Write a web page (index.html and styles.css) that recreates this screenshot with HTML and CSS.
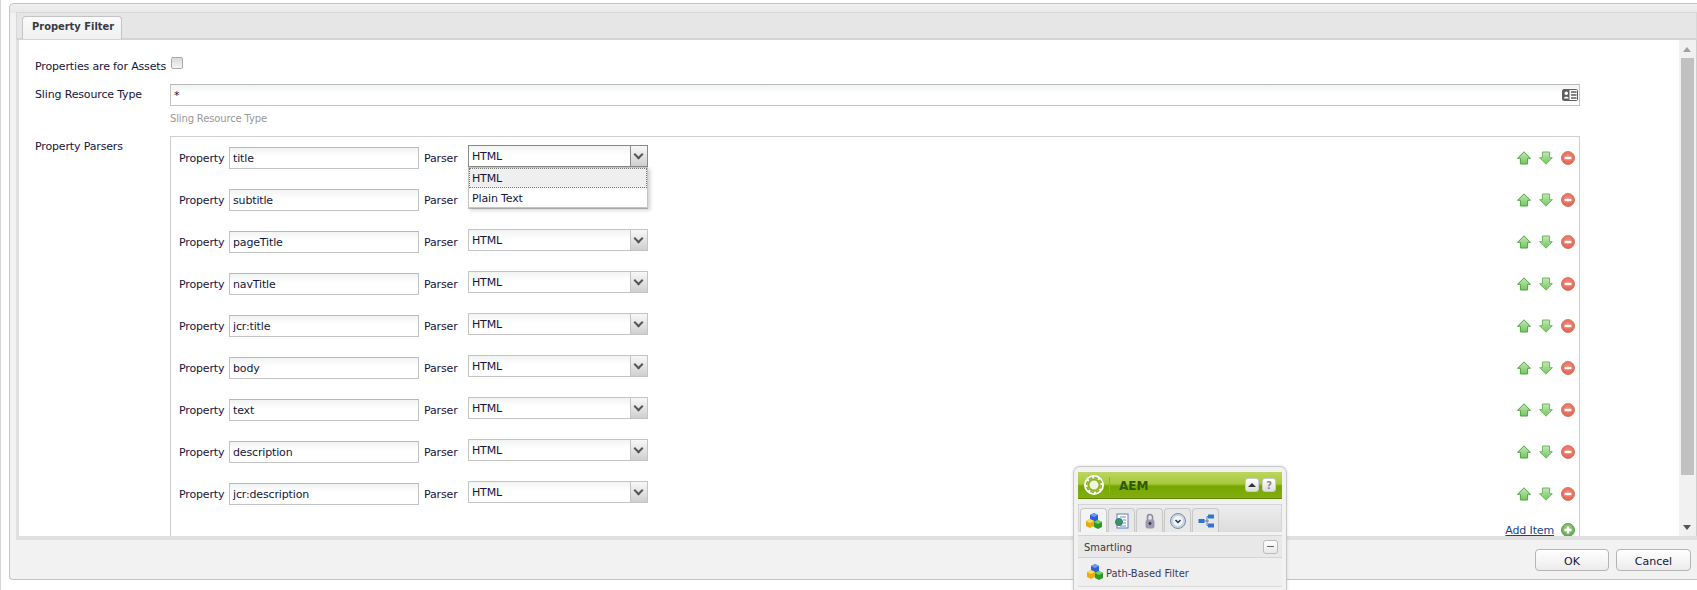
FILE: index.html
```html
<!DOCTYPE html>
<html lang="en">

<head>
    <meta charset="UTF-8">
    <title>Property Filter</title>
    <link rel="stylesheet" href="styles.css">
</head>

<body>
    <svg class="icon-defs" width="0" height="0">
        <defs>
            <linearGradient id="arrow-green" x1="0" y1="0" x2="0" y2="1">
                <stop offset="0" stop-color="#c4e8b8" />
                <stop offset="1" stop-color="#74c462" />
            </linearGradient>
            <radialGradient id="red-ball" cx="0.5" cy="0.4" r="0.6">
                <stop offset="0" stop-color="#f2907f" />
                <stop offset="1" stop-color="#e0604f" />
            </radialGradient>
            <radialGradient id="green-ball" cx="0.5" cy="0.4" r="0.6">
                <stop offset="0" stop-color="#a6d592" />
                <stop offset="1" stop-color="#5da54f" />
            </radialGradient>
            <symbol id="ico-up" viewBox="0 0 14 14">
                <path d="M7 .8 13.4 7.3H10.6V13H3.4V7.3H.6Z" fill="url(#arrow-green)" stroke="#4fa43f" stroke-width="1" />
            </symbol>
            <symbol id="ico-down" viewBox="0 0 14 14">
                <path d="M7 13.2 13.4 6.7H10.6V1H3.4V6.7H.6Z" fill="url(#arrow-green)" stroke="#6cb85a" stroke-width="1" />
            </symbol>
            <symbol id="ico-remove" viewBox="0 0 14 14">
                <circle cx="7" cy="7" r="6.5" fill="url(#red-ball)" stroke="#d9786c" />
                <rect x="3.5" y="5.8" width="7" height="2.4" fill="#fff" />
            </symbol>
            <symbol id="ico-add" viewBox="0 0 14 14">
                <circle cx="7" cy="7" r="6.5" fill="url(#green-ball)" stroke="#5f9f55" />
                <path d="M5.8 3.4H8.2V5.8H10.6V8.2H8.2V10.6H5.8V8.2H3.4V5.8H5.8Z" fill="#fff" />
            </symbol>
            <symbol id="ico-cubes" viewBox="0 0 16 16">
                <path d="M4 2 8 0 12 2V7L8 9 4 7Z" fill="#2c62d8" />
                <path d="M4 2 8 4 12 2 8 0Z" fill="#6f9cf0" />
                <path d="M0 8 4 6 8 8V13L4 15 0 13Z" fill="#e8ac10" />
                <path d="M0 8 4 10 8 8 4 6Z" fill="#f8dc60" />
                <path d="M8 9 12 7 16 9V14L12 16 8 14Z" fill="#2c9a24" />
                <path d="M8 9 12 11 16 9 12 7Z" fill="#78d060" />
            </symbol>
        </defs>
    </svg>

    <div class="dialog">
        <div class="tab-strip">
            <div class="tab">Property Filter</div>
        </div>

        <div class="dialog-body">
            <div class="form-pane">
                <div class="field-row assets-row">
                    <label class="field-label">Properties are for Assets</label>
                    <span class="check"></span>
                </div>

                <div class="field-row resource-row">
                    <label class="field-label">Sling Resource Type</label>
                    <div class="field-main">
                        <div class="text-box resource-box">
                            <span>*</span>
                            <svg class="card-icon" viewBox="0 0 16 12" width="16" height="12">
                                <rect x="0.5" y="0.5" width="15" height="11" rx="1" fill="#fff" stroke="#5f5f5f" />
                                <rect x="1" y="1" width="6.5" height="10" fill="#5f5f5f" />
                                <circle cx="4.3" cy="4.2" r="1.7" fill="#fff" />
                                <path d="M1.8 9.5C2 7 6.5 7 6.8 9.5Z" fill="#fff" />
                                <path d="M9 3H14.5M9 6H14.5M9 9H14.5" stroke="#5f5f5f" stroke-width="1.3" />
                            </svg>
                        </div>
                        <div class="hint">Sling Resource Type</div>
                    </div>
                </div>

                <div class="field-row parsers-row">
                    <label class="field-label">Property Parsers</label>
                    <div class="parser-panel">
                        <div class="parser-row">
                            <span class="row-label">Property</span>
                            <div class="text-box prop-box">title</div>
                            <span class="row-label parser-label">Parser</span>
                            <div class="select-box select-open">
                                <span>HTML</span><i class="select-btn"></i>
                                <ul class="dropdown">
                                    <li class="dropdown-active">HTML</li>
                                    <li>Plain Text</li>
                                </ul>
                            </div>
                            <div class="row-tools">
                                <svg><use href="#ico-up" /></svg>
                                <svg><use href="#ico-down" /></svg>
                                <svg><use href="#ico-remove" /></svg>
                            </div>
                        </div>
                        <div class="parser-row">
                            <span class="row-label">Property</span>
                            <div class="text-box prop-box">subtitle</div>
                            <span class="row-label parser-label">Parser</span>
                            <!-- covered by the open dropdown above -->
                            <div class="select-box"><i class="select-btn"></i></div>
                            <div class="row-tools">
                                <svg><use href="#ico-up" /></svg>
                                <svg><use href="#ico-down" /></svg>
                                <svg><use href="#ico-remove" /></svg>
                            </div>
                        </div>
                        <div class="parser-row">
                            <span class="row-label">Property</span>
                            <div class="text-box prop-box">pageTitle</div>
                            <span class="row-label parser-label">Parser</span>
                            <div class="select-box"><span>HTML</span><i class="select-btn"></i></div>
                            <div class="row-tools">
                                <svg><use href="#ico-up" /></svg>
                                <svg><use href="#ico-down" /></svg>
                                <svg><use href="#ico-remove" /></svg>
                            </div>
                        </div>
                        <div class="parser-row">
                            <span class="row-label">Property</span>
                            <div class="text-box prop-box">navTitle</div>
                            <span class="row-label parser-label">Parser</span>
                            <div class="select-box"><span>HTML</span><i class="select-btn"></i></div>
                            <div class="row-tools">
                                <svg><use href="#ico-up" /></svg>
                                <svg><use href="#ico-down" /></svg>
                                <svg><use href="#ico-remove" /></svg>
                            </div>
                        </div>
                        <div class="parser-row">
                            <span class="row-label">Property</span>
                            <div class="text-box prop-box">jcr:title</div>
                            <span class="row-label parser-label">Parser</span>
                            <div class="select-box"><span>HTML</span><i class="select-btn"></i></div>
                            <div class="row-tools">
                                <svg><use href="#ico-up" /></svg>
                                <svg><use href="#ico-down" /></svg>
                                <svg><use href="#ico-remove" /></svg>
                            </div>
                        </div>
                        <div class="parser-row">
                            <span class="row-label">Property</span>
                            <div class="text-box prop-box">body</div>
                            <span class="row-label parser-label">Parser</span>
                            <div class="select-box"><span>HTML</span><i class="select-btn"></i></div>
                            <div class="row-tools">
                                <svg><use href="#ico-up" /></svg>
                                <svg><use href="#ico-down" /></svg>
                                <svg><use href="#ico-remove" /></svg>
                            </div>
                        </div>
                        <div class="parser-row">
                            <span class="row-label">Property</span>
                            <div class="text-box prop-box">text</div>
                            <span class="row-label parser-label">Parser</span>
                            <div class="select-box"><span>HTML</span><i class="select-btn"></i></div>
                            <div class="row-tools">
                                <svg><use href="#ico-up" /></svg>
                                <svg><use href="#ico-down" /></svg>
                                <svg><use href="#ico-remove" /></svg>
                            </div>
                        </div>
                        <div class="parser-row">
                            <span class="row-label">Property</span>
                            <div class="text-box prop-box">description</div>
                            <span class="row-label parser-label">Parser</span>
                            <div class="select-box"><span>HTML</span><i class="select-btn"></i></div>
                            <div class="row-tools">
                                <svg><use href="#ico-up" /></svg>
                                <svg><use href="#ico-down" /></svg>
                                <svg><use href="#ico-remove" /></svg>
                            </div>
                        </div>
                        <div class="parser-row">
                            <span class="row-label">Property</span>
                            <div class="text-box prop-box">jcr:description</div>
                            <span class="row-label parser-label">Parser</span>
                            <div class="select-box"><span>HTML</span><i class="select-btn"></i></div>
                            <div class="row-tools">
                                <svg><use href="#ico-up" /></svg>
                                <svg><use href="#ico-down" /></svg>
                                <svg><use href="#ico-remove" /></svg>
                            </div>
                        </div>
                        <div class="add-row">
                            <a class="add-link" href="#">Add Item</a>
                            <svg><use href="#ico-add" /></svg>
                        </div>
                    </div>
                </div>
            </div>

            <div class="scrollbar">
                <i class="scroll-arrow-up"></i>
                <div class="scroll-thumb"></div>
                <i class="scroll-arrow"></i>
            </div>
        </div>

        <div class="dialog-footer">
            <button class="dlg-btn">OK</button>
            <button class="dlg-btn">Cancel</button>
        </div>
    </div>

    <!-- floating sidekick -->
    <div class="sidekick">
        <div class="sk-head">
            <svg class="sk-logo" viewBox="0 0 20 20" width="20" height="20">
                <circle cx="10" cy="10" r="10" fill="#fff" />
                <circle cx="10" cy="10" r="5.6" fill="#f1f6df" stroke="#8db52a" stroke-width="2.2" />
                <circle cx="10" cy="10" r="7.4" fill="none" stroke="#8db52a" stroke-width="1.6" stroke-dasharray="3.8 2" />
            </svg>
            <span class="sk-sep"></span>
            <span class="sk-title">AEM</span>
            <span class="sk-btn"><i class="sk-caret"></i></span>
            <span class="sk-btn sk-help">?</span>
        </div>
        <div class="sk-tabs">
            <span class="sk-tab sk-tab-on">
                <svg width="16" height="16"><use href="#ico-cubes" /></svg>
            </span>
            <span class="sk-tab">
                <svg viewBox="0 0 16 16" width="16" height="16">
                    <rect x="3" y="1" width="11" height="14" fill="#fff" stroke="#5a7fb5" />
                    <path d="M6 4H12M9 7H12M9 10H12M6 13H12" stroke="#6f8fbf" />
                    <circle cx="5" cy="9" r="3.5" fill="#3c9a4a" stroke="#2c6fb5" />
                </svg>
            </span>
            <span class="sk-tab">
                <svg viewBox="0 0 16 16" width="16" height="16">
                    <path d="M5.5 7V4A2.5 2.5 0 0 1 10.5 4V7" fill="none" stroke="#8a8a9c" stroke-width="1.6" />
                    <rect x="3.5" y="6.5" width="9" height="9" rx="2.5" fill="#9a9ab0" />
                    <circle cx="8" cy="10.5" r="1.4" fill="#33334a" />
                </svg>
            </span>
            <span class="sk-tab">
                <svg viewBox="0 0 16 16" width="16" height="16">
                    <circle cx="8" cy="8" r="7.5" fill="#c4d6e6" stroke="#7d8ea0" />
                    <circle cx="8" cy="8" r="5" fill="#f2f6f9" />
                    <path d="M5.5 7 8 9.5 10.5 7" fill="none" stroke="#23364d" stroke-width="1.5" />
                </svg>
            </span>
            <span class="sk-tab">
                <svg viewBox="0 0 16 16" width="16" height="16">
                    <path d="M5 8H11M11 3.5H9V12.5H11" fill="none" stroke="#5a7fb5" />
                    <rect x="0.5" y="6" width="6" height="4" fill="#2f74d0" />
                    <rect x="10" y="1.5" width="6" height="4" fill="#2f74d0" />
                    <rect x="10" y="10.5" width="6" height="4" fill="#2f74d0" />
                </svg>
            </span>
        </div>
        <div class="sk-group">
            <span class="sk-text">Smartling</span>
            <span class="sk-collapse"></span>
        </div>
        <div class="sk-item">
            <svg width="16" height="16"><use href="#ico-cubes" /></svg>
            <span class="sk-text">Path-Based Filter</span>
        </div>
        <div class="sk-rest"></div>
    </div>
</body>

</html>
```
FILE: styles.css
```css
/* General Reset */
* {
    margin: 0;
    padding: 0;
    box-sizing: border-box;
}

html,
body {
    height: 590px;
    overflow: hidden;
}

body {
    font-family: Tahoma, "DejaVu Sans", sans-serif;
    font-size: 11px;
    letter-spacing: -0.15px;
    background: #fff;
    color: #15153c;
    border-left: 1px solid #d4d4d4;
    padding: 3px 0 0 8px;
    position: relative;
}

.icon-defs {
    position: absolute;
}

.dialog {
    height: 577px;
    background: linear-gradient(#f0f0f0, #e8e8e8 9px, #f2f2f2 9px);
    border: 1px solid #c4c4c4;
    border-right: none;
    border-radius: 5px 0 0 4px;
    padding: 8px 0 0 6px;
    display: flex;
    flex-direction: column;
}

.tab-strip {
    height: 28px;
    flex: none;
    background: #e6e6e6;
    border: 1px solid #d8d8d8;
    border-bottom: 2px solid #d4d4d4;
    padding: 3px 0 0 5px;
}

.tab {
    width: 100px;
    height: 23px;
    background: linear-gradient(#fafafa, #f0f0f0);
    border: 1px solid #c4c4c4;
    border-bottom: none;
    border-radius: 4px 4px 0 0;
    font-family: "DejaVu Sans Condensed", "DejaVu Sans", sans-serif;
    font-weight: bold;
    font-size: 11px;
    letter-spacing: 0;
    color: #3a3a44;
    line-height: 20px;
    white-space: nowrap;
    padding-left: 9px;
}

.dialog-body {
    height: 500px;
    flex: none;
    background: #fff;
    border-style: solid;
    border-width: 0 0 4px 3px;
    border-color: #e0e0e0;
    display: flex;
}

.form-pane {
    flex: 1;
    padding: 13px 0 0 16px;
    min-width: 0;
}

.field-row {
    display: flex;
}

.field-label {
    width: 135px;
    flex: none;
    white-space: nowrap;
}

.assets-row {
    height: 31px;
    line-height: 14px;
    padding-top: 7px;
}

.check {
    width: 12px;
    height: 12px;
    margin: -3px 0 0 1px;
    background: linear-gradient(#dadada, #f4f4f4);
    border: 1px solid #a9a9a9;
    border-radius: 2px;
}

.resource-row {
    height: 52px;
}

.resource-row .field-label {
    padding-top: 4px;
    line-height: 14px;
}

.field-main {
    width: 1410px;
}

.text-box {
    height: 22px;
    background: linear-gradient(#f1f4f3, #fff 9px);
    border: 1px solid #c4c4c4;
    border-top-color: #b9b9b9;
    line-height: 21px;
    padding-left: 3px;
    color: #15153c;
}

.resource-box {
    display: flex;
    justify-content: space-between;
    align-items: center;
    padding-right: 1px;
}

.card-icon {
    flex: none;
}

.hint {
    margin-top: 6px;
    font-size: 10px;
    line-height: 14px;
    color: #999;
}

.parsers-row .field-label {
    padding-top: 4px;
    line-height: 14px;
}

.parser-panel {
    width: 1410px;
    height: 400px;
    border: 1px solid #cfcfcf;
    border-bottom: none;
    padding: 10px 0 0 8px;
    overflow: hidden;
}

.parser-row {
    height: 42px;
    display: flex;
    align-items: flex-start;
}

.row-label {
    width: 50px;
    flex: none;
    padding-top: 5px;
    line-height: 14px;
}

.prop-box {
    width: 190px;
    flex: none;
    height: 22px;
}

.parser-label {
    width: 49px;
    padding-left: 5px;
}

.select-box {
    position: relative;
    width: 180px;
    height: 22px;
    flex: none;
    margin-top: -2px;
    background: linear-gradient(#f1f4f3, #fff 9px);
    border: 1px solid #c4c4c4;
    line-height: 22px;
    padding-left: 3px;
}

.select-btn {
    position: absolute;
    top: 0;
    right: 0;
    width: 17px;
    height: 20px;
    background: linear-gradient(#f8f8f8, #cfcfcf);
    border-left: 1px solid #c4c4c4;
}

.select-btn::after {
    content: "";
    position: absolute;
    top: 5px;
    left: 4px;
    width: 5px;
    height: 5px;
    border: solid #555;
    border-width: 0 2px 2px 0;
    transform: rotate(45deg);
}

.select-open {
    border-color: #8a8a8a;
}

.select-open .select-btn {
    border-left-color: #8a8a8a;
}

.dropdown {
    position: absolute;
    z-index: 2;
    top: 21px;
    left: -1px;
    width: 180px;
    height: 41px;
    list-style: none;
    background: #fff;
    border: 1px solid #c4c4c4;
    box-shadow: 2px 2px 4px rgba(0, 0, 0, 0.2);
}

.dropdown li {
    height: 20px;
    padding-left: 3px;
    line-height: 21px;
}

.dropdown-active {
    background: #efefef;
    border: 1px dotted #777;
    padding-left: 2px !important;
    line-height: 19px !important;
}

.row-tools {
    margin-left: auto;
    margin-right: 4px;
    display: flex;
    gap: 8px;
}

.row-tools svg,
.add-row svg {
    width: 14px;
    height: 14px;
    margin-top: 4px;
    flex: none;
}

.add-row {
    height: 20px;
    display: flex;
    justify-content: flex-end;
    gap: 7px;
    padding-right: 4px;
    margin-top: -4px;
}

.add-row svg {
    margin-top: 2px;
}

.add-link {
    color: #15448f;
    line-height: 19px;
}

.scrollbar {
    width: 18px;
    flex: none;
    margin-left: auto;
    background: #f1f1f1;
    border-right: 1px solid #cfcfcf;
    padding-top: 18px;
    position: relative;
}

.scroll-thumb {
    width: 13px;
    height: 417px;
    margin-left: 2px;
    background: #c1c1c1;
}

.scroll-arrow-up {
    position: absolute;
    top: 7px;
    left: 4px;
    border: 4px solid transparent;
    border-top: none;
    border-bottom: 5px solid #a0a0a0;
}

.scroll-arrow {
    position: absolute;
    bottom: 6px;
    left: 4px;
    border: 4px solid transparent;
    border-top: 5px solid #555;
    border-bottom: none;
}

.dialog-footer {
    flex: 1;
    display: flex;
    justify-content: flex-end;
    gap: 7px;
    padding: 9px 6px 0 0;
}

.dlg-btn {
    width: 75px;
    height: 22px;
    padding-top: 2px;
    font-family: inherit;
    font-size: 11px;
    color: #15153c;
    background: linear-gradient(#fff, #ececec);
    border: 1px solid #b5b5b5;
    border-radius: 4px;
}

.dlg-btn:first-child {
    width: 74px;
}

/* sidekick floats over the dialog */
.sidekick {
    position: absolute;
    left: 1072px;
    top: 466px;
    width: 214px;
    height: 140px;
    font-family: "DejaVu Sans Condensed", "DejaVu Sans", sans-serif;
    letter-spacing: 0;
    background: #f2f2f2;
    border: 1px solid #c8c8c8;
    border-radius: 7px 7px 0 0;
    padding: 5px 4px 0;
    box-shadow: 0 0 3px rgba(0, 0, 0, 0.15);
}

.sk-head {
    height: 27px;
    display: flex;
    align-items: center;
    padding: 0 6px;
    border-bottom: 1px solid #5d8a00;
    background: linear-gradient(#bcd65e, #a6c83e 45%, #76a600 55%, #83ae0f);
}

.sk-logo {
    flex: none;
}

.sk-sep {
    width: 1px;
    height: 16px;
    margin: 0 9px 0 5px;
    background: #8fb33a;
}

.sk-title {
    flex: 1;
    padding-top: 2px;
    font-family: "DejaVu Sans", sans-serif;
    font-size: 12px;
    font-weight: bold;
    color: #2f5a00;
}

.sk-btn {
    width: 14px;
    height: 14px;
    margin-left: 3px;
    background: linear-gradient(#fff, #dedede);
    border: 1px solid #ccc;
    border-radius: 3px;
    display: flex;
    align-items: center;
    justify-content: center;
}

.sk-help {
    font-weight: bold;
    font-size: 11px;
    color: #888;
}

.sk-caret {
    border: 4px solid transparent;
    border-top: none;
    border-bottom: 4px solid #333;
}

.sk-tabs {
    height: 28px;
    margin-top: 5px;
    padding: 3px 0 0 1px;
    display: flex;
    gap: 1px;
    background: linear-gradient(#ededed, #dcdcdc);
    border: 1px solid #d4d4d4;
    border-bottom: none;
}

.sk-tab {
    width: 27px;
    height: 24px;
    display: flex;
    align-items: center;
    justify-content: center;
    background: #e8e8e8;
    border: 1px solid #c8c8c8;
    border-bottom: none;
    border-radius: 4px 4px 0 0;
}

.sk-tab-on {
    background: #f4f4f4;
}

.sk-text {
    padding-top: 2px;
}

.sk-group {
    height: 23px;
    margin-top: 3px;
    padding: 0 4px 0 6px;
    display: flex;
    align-items: center;
    justify-content: space-between;
    background: #e8e8e8;
    border-top: 1px solid #d4d4d4;
    border-bottom: 1px solid #d4d4d4;
    color: #3a3a44;
}

.sk-collapse {
    width: 15px;
    height: 14px;
    background: linear-gradient(#fff, #e8e8e8);
    border: 1px solid #bbb;
    border-radius: 3px;
    position: relative;
}

.sk-collapse::after {
    content: "";
    position: absolute;
    left: 3px;
    top: 5px;
    width: 7px;
    height: 1px;
    background: #666;
}

.sk-item {
    height: 29px;
    padding-left: 9px;
    display: flex;
    align-items: center;
    gap: 3px;
    background: #efefef;
    border-bottom: 1px solid #dcdcdc;
    color: #3a3a55;
}

.sk-rest {
    height: 30px;
    background: #f2f2f2;
}
```
